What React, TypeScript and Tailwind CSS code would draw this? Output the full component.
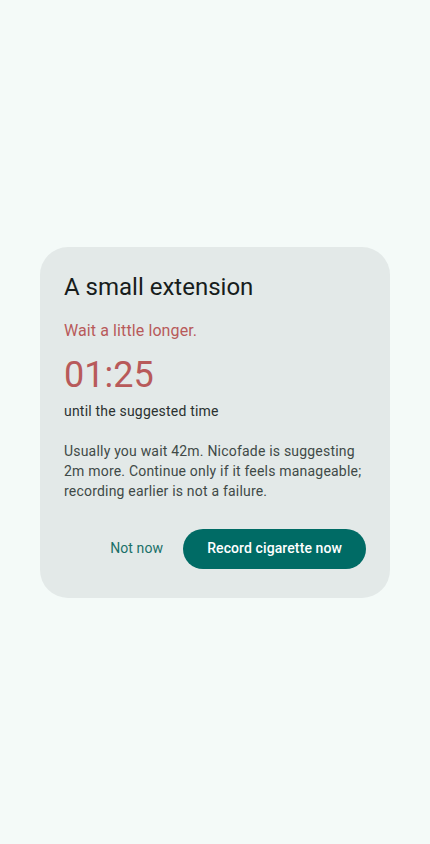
export default function App() {
    return (
        <main
            className="h-[844px] w-full bg-[#f4faf8] flex items-center justify-center"
            style={{ fontFamily: "Roboto, 'Liberation Sans', sans-serif" }}
        >
            <div className="w-[350px] rounded-[28px] bg-[#e3e9e8] px-6 pt-6 pb-[29px] flex flex-col">
                <h2 className="text-[24px] leading-8 text-[#171d1c]">A small extension</h2>
                <p className="mt-4 text-[16px] leading-6 tracking-[0.1px] text-[#b85a5a]">Wait a little longer.</p>
                <div className="mt-[10px] text-[36px] leading-[44px] text-[#b85a5a]">01:25</div>
                <p className="mt-[4px] text-[14px] leading-5 tracking-[0.2px] text-[#2b3130]">until the suggested time</p>
                <p className="mt-5 text-[14px] leading-5 tracking-[0.2px] text-[#3f4947]">
                    Usually you wait 42m. Nicofade is suggesting 2m more. Continue only if it feels manageable; recording earlier is not a failure.
                </p>
                <div className="mt-7 flex flex-row justify-end items-center gap-2">
                    <button className="h-10 px-3 rounded-full text-[14px] tracking-[0.1px] text-[#1a7069]">Not now</button>
                    <button className="h-10 px-6 rounded-full bg-[#006b65] text-[14px] font-medium tracking-[0.1px] text-white">Record cigarette now</button>
                </div>
            </div>
        </main>
    )
}
